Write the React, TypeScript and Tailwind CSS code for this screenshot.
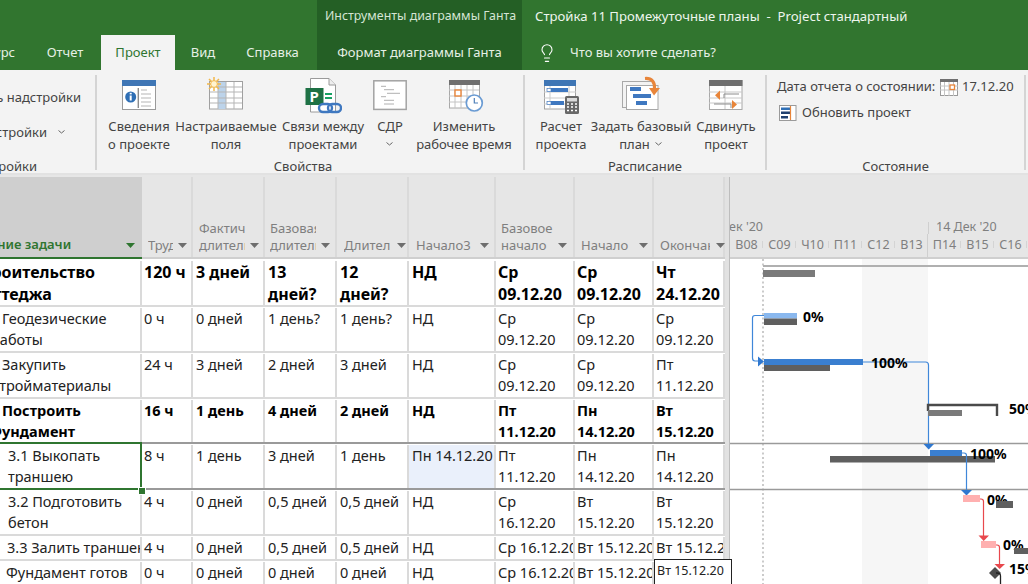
import { Lightbulb } from "lucide-react";

const FONT = "font-['Noto_Sans','Open_Sans',sans-serif]";

function Chevron({ className = "" }: { className?: string }) {
  return (
    <svg width="9" height="6" viewBox="0 0 9 6" className={`shrink-0 ${className}`}>
      <path d="M1.5 1.5 L4.5 4 L7.5 1.5" fill="none" stroke="#666" strokeWidth="1" />
    </svg>
  );
}

function SortArrow() {
  return (
    <svg width="9" height="5" viewBox="0 0 9 5" className="shrink-0">
      <path d="M0 0 H9 L4.5 5 Z" fill="#6e6e6e" />
    </svg>
  );
}

function InfoIcon() {
  return (
    <svg width="34" height="40" viewBox="0 0 34 40">
      <rect x="0.5" y="5.5" width="33" height="29" fill="#fff" stroke="#9a9a9a" />
      <rect x="0" y="5" width="34" height="6" fill="#3f76b5" />
      <circle cx="8.7" cy="22" r="5.5" fill="#2f6fb5" />
      <rect x="7.7" y="20.5" width="2" height="5" fill="#fff" />
      <rect x="7.7" y="17.8" width="2" height="1.6" fill="#fff" />
      <path d="M16.3 13 V33" stroke="#8c8c8c" strokeWidth="1.4" />
      <path d="M19 15 H25 M19 19 H29 M19 23 H29 M19 27 H29 M19 31 H29" stroke="#b5b5b5" />
    </svg>
  );
}

function FieldsIcon() {
  return (
    <svg width="38" height="40" viewBox="0 0 38 40">
      <rect x="2.5" y="6.5" width="33" height="27.5" fill="#fff" stroke="#a0a0a0" />
      <rect x="11" y="7" width="8" height="27" fill="#bcd3ea" />
      <path d="M3 12 H35 M3 17 H35 M3 23 H35 M3 28 H35 M11 7 V34 M19 7 V34 M27 7 V34" stroke="#b5b5b5" />
      <path d="M7 2 V16 M0 9 H14 M2 4 L12 14 M12 4 L2 14" stroke="#f2b84b" strokeWidth="1.5" />
      <circle cx="7" cy="9" r="3.4" fill="#fff3cf" stroke="#f2b84b" />
    </svg>
  );
}

function LinksIcon() {
  return (
    <svg width="38" height="40" viewBox="0 0 38 40">
      <path d="M6.5 3.5 H25 L31.5 10 V37 H6.5 Z" fill="#fff" stroke="#9a9a9a" />
      <path d="M25 3.5 V10 H31.5" fill="#eee" stroke="#9a9a9a" />
      <rect x="1.5" y="13" width="18" height="17" fill="#1e7145" />
      <text x="5.5" y="27" fontSize="15" fontWeight="700" fill="#fff" fontFamily="Noto Sans">P</text>
      <path d="M21 19 H28 M21 23 H28" stroke="#17a163" strokeWidth="1.8" />
      <rect x="15" y="29" width="13" height="8" rx="4" fill="none" stroke="#3f78c0" strokeWidth="2.4" />
      <rect x="24" y="29" width="13" height="8" rx="4" fill="none" stroke="#3f78c0" strokeWidth="2.4" />
    </svg>
  );
}

function WbsIcon() {
  return (
    <svg width="34" height="40" viewBox="0 0 34 40">
      <rect x="0.8" y="5.8" width="32.4" height="28.6" fill="#fff" stroke="#a3a3a3" strokeWidth="1.5" />
      <path d="M8 11.3 H13 M11 14.7 H21 M14 18.3 H27 M8 21.7 H13 M11 25.3 H21 M11 29 H21" stroke="#b0b0b0" />
    </svg>
  );
}

function CalendarClockIcon() {
  return (
    <svg width="39" height="40" viewBox="0 0 39 40">
      <rect x="4.5" y="5.5" width="30" height="27.5" fill="#fff" stroke="#a8a8a8" />
      <rect x="4" y="5" width="31" height="5" fill="#6f6f6f" />
      <path d="M4 15 H34 M4 21 H34 M4 27 H34 M10 10 V33 M16 10 V33 M22 10 V33 M28 10 V33" stroke="#c4c4c4" />
      <rect x="10" y="15" width="6" height="6" fill="#fff" stroke="#e8853a" strokeWidth="1.4" />
      <circle cx="29.3" cy="28" r="8" fill="#fff" stroke="#6a9bd3" strokeWidth="1.7" />
      <path d="M29.3 23 V28 H33" fill="none" stroke="#4d7fb8" strokeWidth="1.2" />
    </svg>
  );
}

function CalcIcon() {
  return (
    <svg width="38" height="40" viewBox="0 0 38 40">
      <rect x="2.5" y="5.5" width="31" height="28.5" fill="#fff" stroke="#a3a3a3" />
      <rect x="2" y="5" width="32" height="6" fill="#3f76b5" />
      <path d="M2 17 H34 M2 23 H34 M2 29 H34 M8 11 V34 M27 11 V22" stroke="#cbcbcb" />
      <rect x="9" y="13" width="17" height="4" fill="#3f78c0" />
      <rect x="9" y="26" width="13" height="4" fill="#3f78c0" />
      <rect x="5" y="13.5" width="4" height="3" fill="#fff" stroke="#3f78c0" strokeWidth="0.7" />
      <rect x="5" y="26.5" width="4" height="3" fill="#fff" stroke="#3f78c0" strokeWidth="0.7" />
      <rect x="23" y="21" width="14" height="18" rx="1.5" fill="#686868" />
      <rect x="25" y="23" width="10" height="3.5" fill="#dcdcdc" />
      <path d="M25 29 H27 M29 29 H31 M33 29 H35 M25 32 H27 M29 32 H31 M33 32 H35 M25 35.5 H27 M29 35.5 H31 M33 35.5 H35" stroke="#fff" strokeWidth="1.6" />
    </svg>
  );
}

function BaselineIcon() {
  return (
    <svg width="38" height="40" viewBox="0 0 38 40">
      <rect x="0.5" y="6.5" width="31" height="26" fill="#f3f3f3" stroke="#a8a8a8" />
      <rect x="4.5" y="10.5" width="31.5" height="24" fill="#fff" stroke="#a8a8a8" />
      <rect x="8" y="12" width="11" height="4" fill="#3f78c0" />
      <rect x="11" y="19" width="18" height="4" fill="#3f78c0" />
      <rect x="14" y="26" width="11" height="4" fill="#3f78c0" />
      <path d="M23 3.5 C30 3 33 7 32.5 14" fill="none" stroke="#e8853a" strokeWidth="3.2" />
      <path d="M27 13 L38 13 L32 20.5 Z" fill="#e8853a" />
    </svg>
  );
}

function MoveIcon() {
  return (
    <svg width="34" height="40" viewBox="0 0 34 40">
      <rect x="0.5" y="5.5" width="32.5" height="29" fill="#fff" stroke="#a8a8a8" />
      <rect x="0" y="5" width="33.5" height="6" fill="#6f6f6f" />
      <path d="M0 17 H33 M0 23 H33 M0 28 H33 M16 11 V34" stroke="#c8c8c8" />
      <path d="M15 23 V19 H30 M5 29 H22 V33" fill="none" stroke="#8c8c8c" />
      <path d="M11 15.5 V25 L6 20.25 Z" fill="#e8853a" />
      <path d="M23 25 V34 L28 29.5 Z" fill="#e8853a" />
    </svg>
  );
}

function SmallCalendarIcon() {
  return (
    <svg width="18" height="17" viewBox="0 0 18 17">
      <rect x="0.5" y="0.5" width="17" height="16" fill="#fff" stroke="#9a9a9a" />
      <rect x="0" y="0" width="18" height="3" fill="#6f6f6f" />
      <path d="M0 7 H18 M0 11 H18 M4.5 3 V17 M9 3 V17 M13.5 3 V17" stroke="#c4c4c4" />
      <rect x="10" y="6" width="4.5" height="4.5" fill="#fff" stroke="#e8853a" strokeWidth="1.3" />
    </svg>
  );
}

function UpdateIcon() {
  return (
    <svg width="18" height="16" viewBox="0 0 18 16">
      <rect x="0.5" y="0.5" width="16.5" height="15" fill="#fff" stroke="#9a9a9a" />
      <rect x="2" y="2.5" width="9" height="2.5" fill="#2f6fb5" />
      <rect x="2" y="6.5" width="9" height="2.5" fill="#1f3f6e" />
      <rect x="2" y="11" width="7" height="2.5" fill="#1f3f6e" />
      <path d="M11.5 1 V15" stroke="#e8853a" strokeWidth="1.2" />
    </svg>
  );
}

function BigButton({ icon, lines, w }: { icon: React.ReactNode; lines: React.ReactNode[]; w: string }) {
  return (
    <div className={`${w} flex flex-col items-center shrink-0`}>
      <div className="h-[40px] flex items-end justify-center">{icon}</div>
      <div className="mt-[2px] text-center leading-[18px] whitespace-nowrap">
        {lines.map((l, i) => (
          <div key={i} className="flex items-center justify-center h-[18px]">{l}</div>
        ))}
      </div>
    </div>
  );
}

function GroupLabel({ children }: { children: React.ReactNode }) {
  return <div className="absolute bottom-[-5px] left-0 right-0 text-center text-[13px] leading-[18px]">{children}</div>;
}

function Ribbon() {
  return (
    <div className="h-[105px] bg-[#f3f3f3] flex text-[13px] text-[#444] border-b-2 border-[#e2e2e2] pt-[5px] pb-[3px]">
      {/* обрезанная слева группа */}
      <div className="w-[97px] shrink-0 border-r-2 border-[#d4d4d4] relative">
        <div className="h-full overflow-hidden">
          <div className="flex justify-end w-[81px] mt-[13px] whitespace-nowrap leading-[18px]">Получить надстройки</div>
          <div className="flex justify-end items-center w-[66px] mt-[17px] whitespace-nowrap leading-[18px]">
            <span className="shrink-0">Настройки</span>
            <Chevron className="ml-[10px]" />
          </div>
        </div>
        <div className="absolute bottom-[-5px] left-0 w-[37px] overflow-hidden flex justify-end whitespace-nowrap leading-[18px]">Надстройки</div>
      </div>

      <div className="w-[428px] shrink-0 border-r-2 border-[#d4d4d4] relative pl-[8px] flex">
        <BigButton w="w-[68px]" icon={<InfoIcon />} lines={["Сведения", "о проекте"]} />
        <BigButton w="w-[106px]" icon={<FieldsIcon />} lines={["Настраиваемые", "поля"]} />
        <BigButton w="w-[88px]" icon={<LinksIcon />} lines={["Связи между", "проектами"]} />
        <BigButton w="w-[46px]" icon={<WbsIcon />} lines={["СДР", <Chevron key="c" />]} />
        <BigButton w="w-[102px]" icon={<CalendarClockIcon />} lines={["Изменить", "рабочее время"]} />
        <GroupLabel>
          <span className="mr-[14px]">Свойства</span>
        </GroupLabel>
      </div>

      <div className="w-[242px] shrink-0 border-r-2 border-[#d4d4d4] relative pl-[4px] flex">
        <BigButton w="w-[64px]" icon={<CalcIcon />} lines={["Расчет", "проекта"]} />
        <BigButton w="w-[96px]" icon={<BaselineIcon />} lines={["Задать базовый", <span key="p" className="flex items-center">план <Chevron className="ml-[4px]" /></span>]} />
        <BigButton w="w-[74px]" icon={<MoveIcon />} lines={["Сдвинуть", "проект"]} />
        <GroupLabel>Расписание</GroupLabel>
      </div>

      <div className="w-[259px] shrink-0 border-r-2 border-[#d4d4d4] relative pl-[10px]">
        <div className="flex items-center mt-[2px] h-[20px] whitespace-nowrap">
          <span className="w-[163px] shrink-0">Дата отчета о состоянии:</span>
          <SmallCalendarIcon />
          <span className="ml-[4px]">17.12.20</span>
        </div>
        <div className="flex items-center mt-[6px] h-[20px] pl-[2px] whitespace-nowrap">
          <UpdateIcon />
          <span className="ml-[5px]">Обновить проект</span>
        </div>
        <GroupLabel>Состояние</GroupLabel>
      </div>
    </div>
  );
}

function TopBar() {
  return (
    <div className="bg-[#31752f] text-white h-[70px] shrink-0 text-[13px]">
      <div className="flex h-[35px]">
        <div className="w-[317px] shrink-0" />
        <div className="w-[205px] shrink-0 bg-[#245f25] pl-[8px] pt-[7px] text-[#d5e5d4] whitespace-nowrap text-[12.4px]">Инструменты диаграммы Ганта</div>
        <div className="pl-[13px] pt-[7px] whitespace-nowrap text-[#eef5ee] text-[13.15px]">Стройка 11 Промежуточные планы&nbsp; -&nbsp; Project стандартный</div>
      </div>
      <div className="flex h-[35px] items-stretch text-[#e6f0e6]">
        <div className="w-[15px] overflow-hidden flex justify-end items-center whitespace-nowrap">Ресурс</div>
        <div className="w-[86px] pl-[14px] flex items-center justify-center">Отчет</div>
        <div className="w-[74px] bg-[#f3f3f3] text-[#2f7530] flex items-center justify-center">Проект</div>
        <div className="w-[56px] flex items-center justify-center">Вид</div>
        <div className="w-[86px] pr-[3px] flex items-center justify-center">Справка</div>
        <div className="w-[205px] bg-[#245f25] flex items-center justify-center whitespace-nowrap">Формат диаграммы Ганта</div>
        <div className="flex items-center pl-[15px]">
          <Lightbulb size={20} strokeWidth={1.3} color="#fff" />
          <span className="ml-[13px]">Что вы хотите сделать?</span>
        </div>
      </div>
    </div>
  );
}

const widths = ["w-[142px]", "w-[51px]", "w-[72px]", "w-[72px]", "w-[72px]", "w-[87px]", "w-[79px]", "w-[79px]", "w-[71px]"];

function HeaderCell({ w, lines, width, arrowGap = "", pl = "pl-[5px]" }: { w: string; lines: string[]; width: string; arrowGap?: string; pl?: string }) {
  return (
    <div className={`${w} ${pl} shrink-0 border-r-2 border-[#dadada] flex flex-col justify-end pb-[3px] text-[13px] leading-[17px] text-[#7f7f7f]`}>
      {lines.length > 1 && <div className={`${width} overflow-hidden whitespace-nowrap`}>{lines[0]}</div>}
      <div className="flex items-center">
        <div className={`${width} overflow-hidden whitespace-nowrap shrink-0`}>{lines[lines.length - 1]}</div>
        <span className={arrowGap}><SortArrow /></span>
      </div>
    </div>
  );
}

function SheetHeader() {
  return (
    <div className="flex h-[82px] bg-[#e6e6e6] border-b-2 border-[#cfcfcf]">
      <div className="w-[142px] shrink-0 -mb-[2px] bg-[#cfcfcf] border-b-2 border-[#2f7530] flex items-end justify-between pb-[2px] pr-[7px] text-[13px] font-semibold leading-[21px] text-[#2f7530] overflow-hidden whitespace-nowrap">
        <span className="-ml-[42px] shrink-0">Название задачи</span>
        <svg width="9" height="5" viewBox="0 0 9 5" className="mb-[7px] shrink-0"><path d="M0 0 H9 L4.5 5 Z" fill="#2f7530" /></svg>
      </div>
      <HeaderCell w={widths[1]} lines={["Труд"]} width="w-[25px]" arrowGap="ml-[5px]" pl="pl-[6px]" />
      <HeaderCell w={widths[2]} lines={["Фактич", "длитель"]} width="w-[46px]" arrowGap="ml-[5px]" pl="pl-[6px]" />
      <HeaderCell w={widths[3]} lines={["Базовая", "длитель"]} width="w-[46px]" arrowGap="ml-[5px]" />
      <HeaderCell w={widths[4]} lines={["Длител"]} width="w-[48px]" arrowGap="ml-[5px]" pl="pl-[7px]" />
      <HeaderCell w={widths[5]} lines={["Начало3"]} width="w-[58px]" arrowGap="ml-[6px]" pl="pl-[7px]" />
      <HeaderCell w={widths[6]} lines={["Базовое", "начало"]} width="w-[52px]" arrowGap="ml-[5px]" />
      <HeaderCell w={widths[7]} lines={["Начало"]} width="w-[52px]" arrowGap="ml-[6px]" pl="pl-[6px]" />
      <HeaderCell w={widths[8]} lines={["Окончание"]} width="w-[50px]" arrowGap="ml-[6px]" pl="pl-[6px]" />
    </div>
  );
}

type Row = {
  h: string;
  text: string;
  line?: string;
  name: { t: string; c: string }[];
  cells: string[][];
  sel?: boolean;
};

const regular = "text-[#222] text-[14.5px] leading-[21px] pt-[1px]";

const rows: Row[] = [
  {
    h: "h-[48px]",
    text: "font-bold text-black text-[16px] leading-[22px] pt-[2px]",
    name: [{ t: "Строительство", c: "-ml-[27px]" }, { t: "коттеджа", c: "-ml-[26px]" }],
    cells: [["120 ч"], ["3 дней"], ["13", "дней?"], ["12", "дней?"], ["НД"], ["Ср", "09.12.20"], ["Ср", "09.12.20"], ["Чт", "24.12.20"]],
  },
  {
    h: "h-[46px]",
    text: regular,
    name: [{ t: "Геодезические", c: "ml-[2px]" }, { t: "работы", c: "-ml-[9px]" }],
    cells: [["0 ч"], ["0 дней"], ["1 день?"], ["1 день?"], ["НД"], ["Ср", "09.12.20"], ["Ср", "09.12.20"], ["Ср", "09.12.20"]],
  },
  {
    h: "h-[46px]",
    text: regular,
    name: [{ t: "Закупить", c: "ml-[2px]" }, { t: "стройматериалы", c: "-ml-[8px]" }],
    cells: [["24 ч"], ["3 дней"], ["2 дней"], ["3 дней"], ["НД"], ["Ср", "09.12.20"], ["Ср", "09.12.20"], ["Пт", "11.12.20"]],
  },
  {
    h: "h-[45px]",
    text: "font-bold text-black text-[14.5px] leading-[21px] pt-[1px]",
    line: "border-[#9a9a9a]",
    name: [{ t: "Построить", c: "ml-[2px]" }, { t: "Фундамент", c: "-ml-[11px]" }],
    cells: [["16 ч"], ["1 день"], ["4 дней"], ["2 дней"], ["НД"], ["Пт", "11.12.20"], ["Пн", "14.12.20"], ["Вт", "15.12.20"]],
  },
  {
    h: "h-[46px]",
    text: regular,
    sel: true,
    line: "border-[#9a9a9a]",
    name: [{ t: "3.1 Выкопать", c: "ml-[8px]" }, { t: "траншею", c: "ml-[8px]" }],
    cells: [["8 ч"], ["1 день"], ["3 дней"], ["1 день"], ["Пн 14.12.20"], ["Пт", "11.12.20"], ["Пн", "14.12.20"], ["Пн", "14.12.20"]],
  },
  {
    h: "h-[46px]",
    text: regular,
    name: [{ t: "3.2 Подготовить", c: "ml-[8px]" }, { t: "бетон", c: "ml-[8px]" }],
    cells: [["4 ч"], ["0 дней"], ["0,5 дней"], ["0,5 дней"], ["НД"], ["Ср", "16.12.20"], ["Вт", "15.12.20"], ["Вт", "15.12.20"]],
  },
  {
    h: "h-[25px]",
    text: regular,
    name: [{ t: "3.3 Залить траншею", c: "ml-[7px]" }],
    cells: [["4 ч"], ["0 дней"], ["0,5 дней"], ["0,5 дней"], ["НД"], ["Ср 16.12.20"], ["Вт 15.12.20"], ["Вт 15.12.20"]],
  },
  {
    h: "h-[25px]",
    text: regular,
    name: [{ t: "Фундамент готов", c: "ml-[6px]" }],
    cells: [["0 ч"], ["0 дней"], ["0 дней"], ["0 дней"], ["НД"], ["Ср 16.12.20"], ["Вт 15.12.20"], ["Вт 15.12.20"]],
  },
];

function SheetRow({ row }: { row: Row }) {
  return (
    <div className={`flex ${row.h} border-b-2 ${row.line ?? "border-[#dadada]"} ${row.text}`}>
      <div className={`${widths[0]} shrink-0 border-r-2 border-[#dadada] overflow-hidden whitespace-nowrap`}>
        {row.name.map((n, i) => (
          <div key={i} className={n.c}>{n.t}</div>
        ))}
      </div>
      {row.cells.map((c, i) => (
        <div
          key={i}
          className={`${widths[i + 1]} shrink-0 border-r-2 border-[#dadada] overflow-hidden whitespace-nowrap ${i >= 1 && i <= 4 ? "pl-[3px]" : "pl-[2px]"} ${row.sel && i === 4 ? "bg-[#eaf0fb]" : ""}`}
        >
          {c.map((l, j) => (
            <div key={j}>{l}</div>
          ))}
        </div>
      ))}
    </div>
  );
}

function Sheet() {
  return (
    <div className="w-[725px] shrink-0 relative overflow-visible">
      <SheetHeader />
      {rows.map((r, i) => (
        <SheetRow key={i} row={r} />
      ))}
      {/* рамка выбранной ячейки */}
      <div className="absolute left-[-2px] top-[265px] w-[144px] h-[48px] border-2 border-[#2f7530]" />
      <div className="absolute left-[138px] top-[310px] w-[6px] h-[6px] bg-[#2f7530] border border-white box-content" />
      {/* подсказка */}
      <div className="absolute left-[654px] top-[382px] w-[78px] h-[26px] bg-white border border-[#222] z-10 pl-[2px] text-[12.5px] leading-[22px] text-[#222] whitespace-nowrap">
        Вт 15.12.20
      </div>
    </div>
  );
}

const days = ["В08", "С09", "Ч10", "П11", "С12", "В13", "П14", "В15", "С16"];

function GanttHeader() {
  return (
    <div className="h-[82px] bg-[#e6e6e6] border-b-2 border-[#cfcfcf] flex flex-col justify-end text-[12.5px] text-[#7f7f7f] overflow-hidden">
      <div className="flex h-[18px] leading-[22px] whitespace-nowrap">
        <div className="w-[199px] shrink-0 relative flex">
          <span className="-ml-[10px]">Дек '20</span>
          <span className="absolute right-0 top-[6px] bottom-0 w-px bg-[#cfcfcf]" />
        </div>
        <div className="pl-[7px]">14 Дек '20</div>
      </div>
      <div className="flex h-[23px]">
        {days.map((d, i) => (
          <div key={d} className="w-[33px] shrink-0 flex items-center justify-center relative">
            {d}
            {i === 5 ? (
              <span className="absolute right-0 top-0 h-full w-px bg-[#cfcfcf]" />
            ) : (
              <span className="absolute right-0 top-[7px] h-[7px] w-px bg-[#d4d4d4]" />
            )}
          </div>
        ))}
      </div>
    </div>
  );
}

function Pct({ x, y, children }: { x: number; y: number; children: string }) {
  return (
    <text x={x} y={y} fontSize="14" fontWeight="700" fill="#000" fontFamily="Noto Sans">
      {children}
    </text>
  );
}

// координаты в системе диаграммы: x = экран - 730, y = экран - 259
function GanttChart() {
  const blue = "#3f87d9";
  const red = "#e8484d";
  return (
    <svg width="298" height="325" viewBox="0 0 298 325" className="block">
      <rect x="132" y="0" width="66" height="325" fill="#f6f6f6" />
      <path d="M33 0 V325" stroke="#a8a8a8" strokeWidth="1.2" strokeDasharray="2 2.5" />
      <path d="M0 184.5 H298 M0 230.5 H298" stroke="#9a9a9a" strokeWidth="1.5" />

      <rect x="33" y="6" width="265" height="2" fill="#b0b0b0" />
      <rect x="33" y="11" width="52" height="7" fill="#7a7a7a" />

      <rect x="34" y="54" width="33" height="5.5" fill="#8ab8ee" />
      <rect x="34" y="59.5" width="33" height="6.5" fill="#5f5f5f" />
      <Pct x={73} y={63}>0%</Pct>
      <path d="M34 56.5 H25 Q22.5 56.5 22.5 59 V99 Q22.5 102 25 102 H28" fill="none" stroke={blue} strokeWidth="1.2" />
      <path d="M28 97.5 L34 102.5 L28 107.5 Z" fill="#2f78d0" />

      <rect x="34" y="100" width="99" height="6" fill="#3a7fd0" />
      <rect x="34" y="106" width="66" height="6" fill="#5f5f5f" />
      <path d="M133 103 H195.5 Q198.5 103 198.5 106 V186" fill="none" stroke={blue} strokeWidth="1.2" />
      <Pct x={141} y={109}>100%</Pct>

      <path d="M198 152 V146 H267 V157" fill="none" stroke="#4a4a4a" strokeWidth="2.4" />
      <rect x="198" y="151" width="34" height="6" fill="#7a7a7a" />
      <Pct x={279} y={155}>50%</Pct>

      <path d="M193.5 185 H204 L198.7 190.5 Z" fill="#2f78d0" />
      <rect x="200" y="191" width="32" height="6" fill="#3a7fd0" />
      <rect x="100" y="197" width="165" height="6.5" fill="#5f5f5f" />
      <path d="M232 194 H234 Q236.5 194 236.5 196.5 V232" fill="none" stroke={blue} strokeWidth="1.2" />
      <Pct x={240} y={200}>100%</Pct>

      <path d="M231 231 H242 L236.5 236.5 Z" fill="#2f78d0" />
      <rect x="233" y="236" width="17" height="7" fill="#ffb0b0" />
      <path d="M250 240 H251 Q253.5 240 253.5 242.5 V277" fill="none" stroke={red} strokeWidth="1.2" />
      <Pct x={257} y={246}>0%</Pct>
      <rect x="266" y="242" width="17" height="7" fill="#5f5f5f" />

      <path d="M248.5 276.5 H259 L253.7 282 Z" fill={red} />
      <rect x="251" y="282" width="15" height="7" fill="#ffb0b0" />
      <path d="M266 286 H267 Q269.5 286 269.5 288.5 V305" fill="none" stroke={red} strokeWidth="1.2" />
      <Pct x={273} y={291}>0%</Pct>
      <rect x="284" y="289" width="14" height="6" fill="#5f5f5f" />

      <path d="M264.5 305 H275 L269.7 310 Z" fill={red} />
      <path d="M265 308 L271 314 L265 320 L259 314 Z" fill="#4a4a4a" />
      <path d="M266 314 H267 Q270.5 314 270.5 317 V325" fill="none" stroke="#222" strokeWidth="1.3" />
      <Pct x={279} y={315}>15%</Pct>
    </svg>
  );
}

export default function App() {
  return (
    <div className={`w-[1028px] h-[584px] overflow-hidden bg-white flex flex-col ${FONT}`}>
      <TopBar />
      <Ribbon />
      <div className="h-[2px] shrink-0 bg-[#e6e6e6]" />
      <div className="flex flex-1 min-h-0">
        <Sheet />
        <div className="w-[5px] shrink-0 bg-[#e2e2e2] border-r border-[#bdbdbd]" />
        <div className="flex-1 min-w-0 overflow-hidden">
          <GanttHeader />
          <GanttChart />
        </div>
      </div>
    </div>
  );
}
